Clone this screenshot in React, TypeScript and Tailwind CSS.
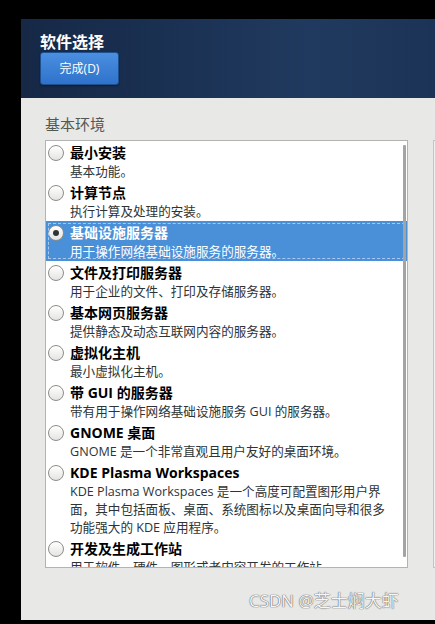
import React from 'react'

// Экран выбора ПО (установщик Anaconda)

interface EnvItem {
  title: string
  desc: string[]
}

const items: EnvItem[] = [
  { title: '最小安装', desc: ['基本功能。'] },
  { title: '计算节点', desc: ['执行计算及处理的安装。'] },
  { title: '基础设施服务器', desc: ['用于操作网络基础设施服务的服务器。'] },
  { title: '文件及打印服务器', desc: ['用于企业的文件、打印及存储服务器。'] },
  { title: '基本网页服务器', desc: ['提供静态及动态互联网内容的服务器。'] },
  { title: '虚拟化主机', desc: ['最小虚拟化主机。'] },
  { title: '带 GUI 的服务器', desc: ['带有用于操作网络基础设施服务 GUI 的服务器。'] },
  { title: 'GNOME 桌面', desc: ['GNOME 是一个非常直观且用户友好的桌面环境。'] },
  {
    title: 'KDE Plasma Workspaces',
    desc: [
      'KDE Plasma Workspaces 是一个高度可配置图形用户界',
      '面，其中包括面板、桌面、系统图标以及桌面向导和很多',
      '功能强大的 KDE 应用程序。',
    ],
  },
  { title: '开发及生成工作站', desc: ['用于软件、硬件、图形或者内容开发的工作站。'] },
]

const SELECTED = 2

function Radio({ checked }: { checked: boolean }) {
  return (
    <div className="w-[16px] h-[16px] rounded-full border border-[#8a8d88] bg-[linear-gradient(#ffffff,#e4e4e2)] flex items-center justify-center shrink-0">
      {checked && <div className="w-[6px] h-[6px] rounded-full bg-[#2e3436]" />}
    </div>
  )
}

export default function App() {
  return (
    <div
      className="w-[435px] h-[624px] bg-black pt-[19px] pl-[21px] pb-[4px] flex flex-col overflow-hidden relative"
      style={{ fontFamily: '"Open Sans", "Noto Sans CJK SC", sans-serif' }}
    >
      {/* Шапка */}
      <div className="h-[79px] shrink-0 bg-[linear-gradient(90deg,#162846_0%,#1b3254_40%,#203a5f_70%,#1b3356_100%)] pl-[19px] pt-[12px]">
        <div className="text-white text-[16px] font-bold leading-[22px]">软件选择</div>
        <button className="mt-[-1px] w-[79px] h-[33px] rounded-[3px] border border-[#1e4f8f] bg-[linear-gradient(#4a8fe0,#2f72cc)] text-white text-[12px] leading-none shadow-[0_1px_2px_rgba(0,0,0,0.4)]">
          完成(D)
        </button>
      </div>

      {/* Основная область */}
      <div className="flex-1 bg-[#e8e8e7] pt-[16px] pl-[24px] overflow-hidden">
        <div className="text-[#555753] text-[15px] leading-[20px]">基本环境</div>
        <div className="mt-[6px] flex">
          <div className="relative shrink-0 w-[363px] h-[428px] border border-[#b3b3b1] bg-white overflow-hidden">
            {items.map((item, i) => {
              const sel = i === SELECTED
              return (
                <div
                  key={item.title}
                  className={
                    sel
                      ? 'flex gap-[6px] pl-[2px] pt-[2px] pr-[4px] bg-[#4a90d9] text-white outline-1 outline-dashed outline-[#a9c8ec] outline-offset-[-3px]'
                      : 'flex gap-[6px] pl-[2px] pt-[2px] pr-[4px] text-[#2e3436]'
                  }
                >
                  <div className="h-[20px] flex items-center">
                    <Radio checked={sel} />
                  </div>
                  <div className="flex flex-col">
                    <div className={sel ? 'text-[14px] font-bold leading-[20px] text-white' : 'text-[14px] font-bold leading-[20px] text-black'}>
                      {item.title}
                    </div>
                    {item.desc.map((line) => (
                      <div key={line} className="text-[12.6px] leading-[18px] whitespace-nowrap">
                        {line}
                      </div>
                    ))}
                  </div>
                </div>
              )
            })}
            {/* Полоса прокрутки */}
            <div className="absolute right-[1px] top-[4px] w-[3px] h-[412px] bg-[#a4a4a2] rounded-[1px]" />
          </div>
          <div className="ml-[25px] shrink-0 w-[20px] h-[428px] border border-[#c4c4c2] bg-[#f0f0ef]" />
        </div>
      </div>

      {/* Водяной знак */}
      <div className="absolute left-[249px] top-[591px] text-[17px] leading-[20px] text-[#f6f6f6] [text-shadow:0_0_1px_#555,0_0_1px_#555]">
        CSDN @芝士焖大虾
      </div>
    </div>
  )
}
